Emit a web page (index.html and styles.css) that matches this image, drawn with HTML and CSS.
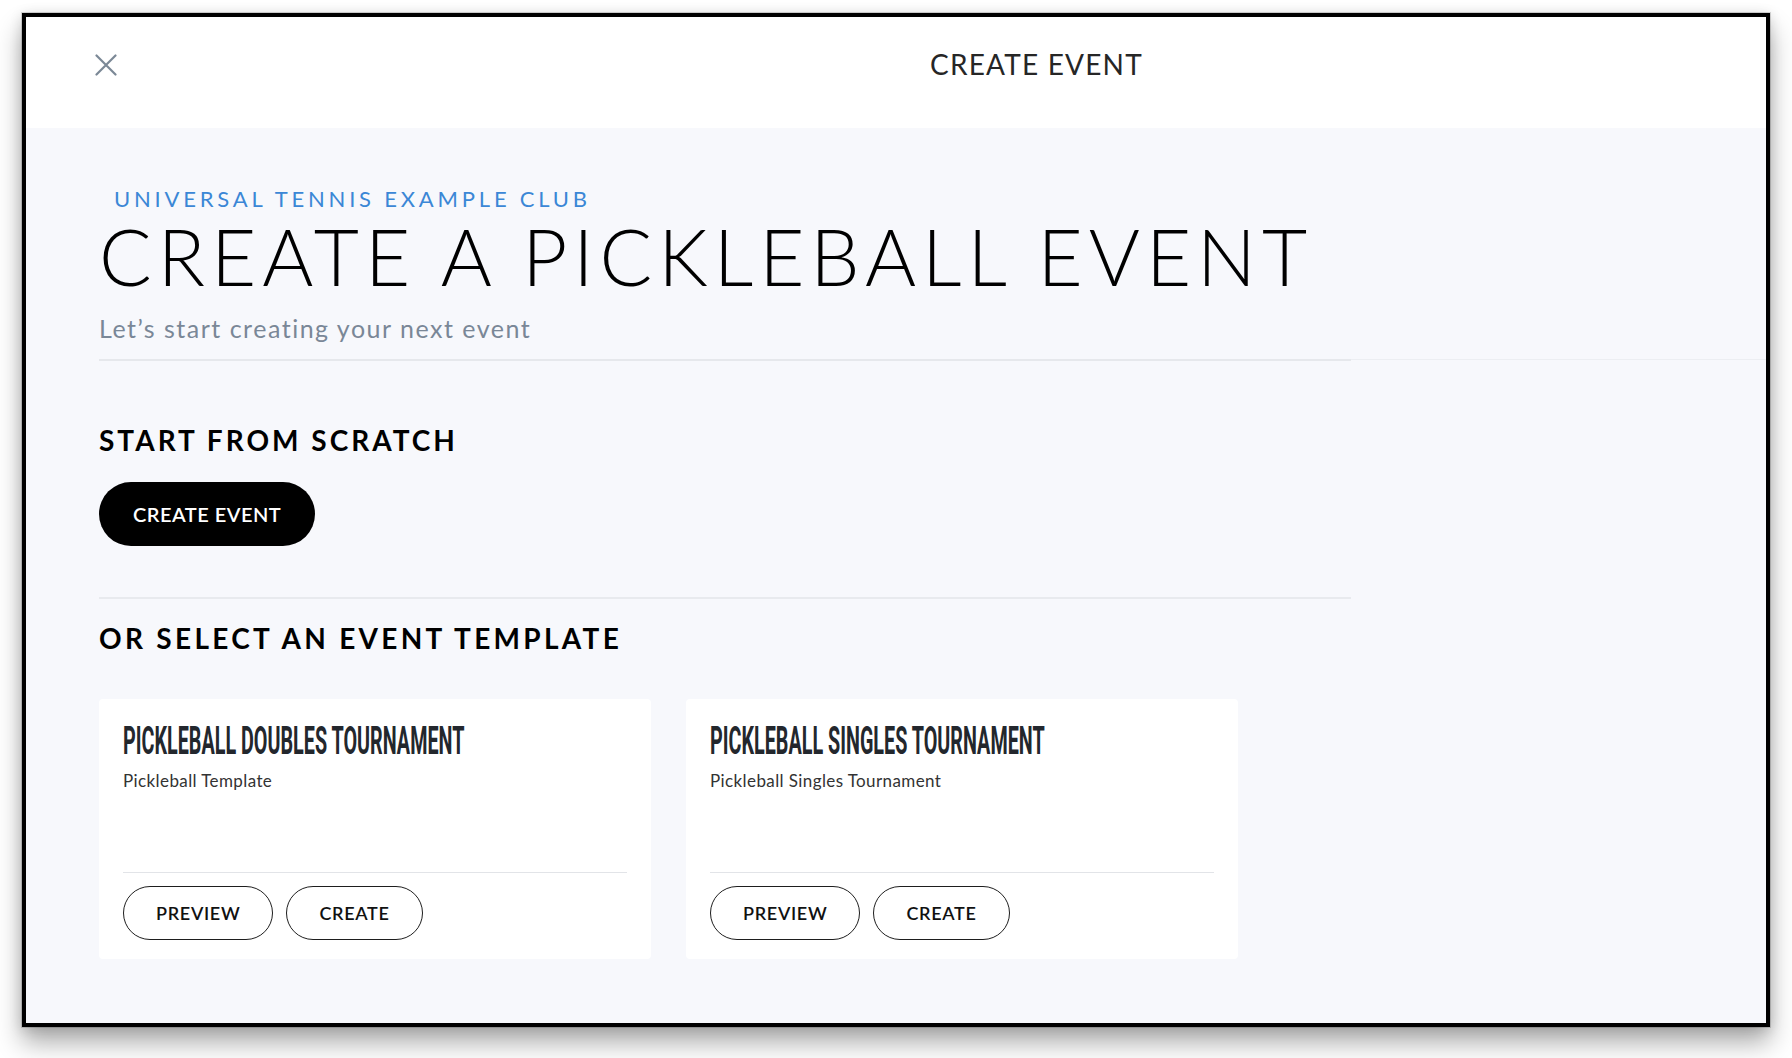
FILE: index.html
```html
<!DOCTYPE html>
<html lang="en">
<head>
<meta charset="utf-8">
<title>Create Event</title>
<link rel="stylesheet" href="styles.css">
</head>
<body>
<div class="stage">
  <div class="window">
    <header class="topbar">
      <button class="close" type="button" aria-label="Close">
        <svg viewBox="0 0 22 22" aria-hidden="true">
          <path d="M1.5 1.5L20.5 20.5M20.5 1.5L1.5 20.5" fill="none" stroke="#7b8896" stroke-width="2.2" stroke-linecap="round"/>
        </svg>
      </button>
      <h1 class="topbar-title">CREATE EVENT</h1>
    </header>

    <main class="content">
      <p class="club">UNIVERSAL TENNIS EXAMPLE CLUB</p>
      <h2 class="page-title">CREATE A PICKLEBALL EVENT</h2>
      <p class="lede">Let’s start creating your next event</p>
      <div class="rule-wide">
        <span class="rule-main"></span>
        <span class="rule-tail"></span>
      </div>

      <h3 class="section-label">START FROM SCRATCH</h3>
      <button class="btn-solid" type="button">CREATE EVENT</button>

      <div class="rule"></div>

      <h3 class="section-label section-label--tight">OR SELECT AN EVENT TEMPLATE</h3>

      <div class="cards">
        <article class="card">
          <h4 class="card-title">PICKLEBALL DOUBLES TOURNAMENT</h4>
          <p class="card-sub">Pickleball Template</p>
          <div class="card-rule"></div>
          <div class="card-actions">
            <button class="btn-outline" type="button">PREVIEW</button>
            <button class="btn-outline" type="button">CREATE</button>
          </div>
        </article>
        <article class="card">
          <h4 class="card-title">PICKLEBALL SINGLES TOURNAMENT</h4>
          <p class="card-sub">Pickleball Singles Tournament</p>
          <div class="card-rule"></div>
          <div class="card-actions">
            <button class="btn-outline" type="button">PREVIEW</button>
            <button class="btn-outline" type="button">CREATE</button>
          </div>
        </article>
      </div>
    </main>
  </div>
</div>
</body>
</html>
```

FILE: styles.css
```css
* {
  box-sizing: border-box;
}

html,
body {
  margin: 0;
  background: #ffffff;
}

body {
  font-family: Lato, "Liberation Sans", sans-serif;
  color: #000;
}

button {
  font-family: inherit;
  cursor: pointer;
}

/* Page frame holding the modal window */
.stage {
  height: 1058px;
  padding: 13px 22px 31px;
}

.window {
  height: 1014px;
  display: flex;
  flex-direction: column;
  border: 4px solid #000;
  background: #f7f8fc;
  box-shadow:
    0 0 0 1px rgba(0, 0, 0, 0.15),
    0 16px 24px rgba(0, 0, 0, 0.32),
    0 2px 12px rgba(0, 0, 0, 0.14);
}

/* Top bar */
.topbar {
  flex: none;
  height: 111px;
  display: flex;
  align-items: flex-start;
  padding: 30px 0 0 69px;
  background: #ffffff;
}

.close {
  width: 22px;
  height: 22px;
  margin-top: 7px;
  padding: 0;
  border: 0;
  background: none;
}

.close svg {
  display: block;
  width: 22px;
  height: 22px;
}

.topbar-title {
  margin: 1px 0 0 813px;
  font-size: 28px;
  font-weight: 400;
  line-height: 1.2;
  letter-spacing: 1.2px;
  color: #262626;
}

/* Main content */
.content {
  flex: 1;
  padding: 58px 0 0 73px;
}

.club {
  margin: 0 0 0 15px;
  font-size: 22px;
  line-height: 1.2;
  letter-spacing: 3.8px;
  color: #3b87d6;
}

.page-title {
  margin: 5px 0 0;
  font-size: 78px;
  font-weight: 300;
  line-height: 1;
  letter-spacing: 5.95px;
  color: #000;
}

.lede {
  margin: 18px 0 0;
  font-size: 25px;
  line-height: 1.2;
  letter-spacing: 1.5px;
  color: #7a8797;
}

.rule-wide {
  display: flex;
  align-items: flex-start;
  margin-top: 16px;
}

.rule-main {
  width: 1252px;
  height: 2px;
  background: #e6e8ec;
}

.rule-tail {
  flex: 1;
  height: 1px;
  background: #eceef2;
}

.section-label {
  margin: 63px 0 0;
  font-size: 28px;
  font-weight: 700;
  line-height: 1.2;
  letter-spacing: 3px;
  color: #000;
}

.section-label--tight {
  margin-top: 23px;
  letter-spacing: 3.3px;
}

.btn-solid {
  display: block;
  height: 64px;
  margin-top: 24px;
  padding: 0 34px;
  border: 0;
  border-radius: 32px;
  background: #000;
  color: #fff;
  font-size: 20px;
  font-weight: 600;
  letter-spacing: 0.5px;
}

.rule {
  width: 1252px;
  height: 2px;
  margin-top: 51px;
  background: #e8eaee;
}

/* Template cards */
.cards {
  display: flex;
  gap: 35px;
  margin-top: 43px;
}

.card {
  width: 552px;
  height: 260px;
  display: flex;
  flex-direction: column;
  padding: 23px 24px 19px;
  background: #ffffff;
  border-radius: 4px;
}

.card-title {
  margin: 0;
  font-family: Roboto, "Liberation Sans", sans-serif;
  font-size: 38px;
  font-weight: 700;
  line-height: 1;
  white-space: nowrap;
  color: #23272d;
  transform: scaleX(0.52);
  transform-origin: left center;
}

.card-sub {
  margin: 11px 0 0;
  font-size: 17px;
  line-height: 1.2;
  letter-spacing: 0.4px;
  color: #333;
}

.card-rule {
  margin-top: auto;
  height: 1px;
  background: #e2e4e8;
}

.card-actions {
  display: flex;
  gap: 13px;
  margin-top: 13px;
}

.btn-outline {
  height: 54px;
  padding: 0 32px;
  border: 1.5px solid #1e1e1e;
  border-radius: 27px;
  background: #fff;
  color: #111;
  font-size: 18px;
  font-weight: 600;
  letter-spacing: 0.7px;
}
```
